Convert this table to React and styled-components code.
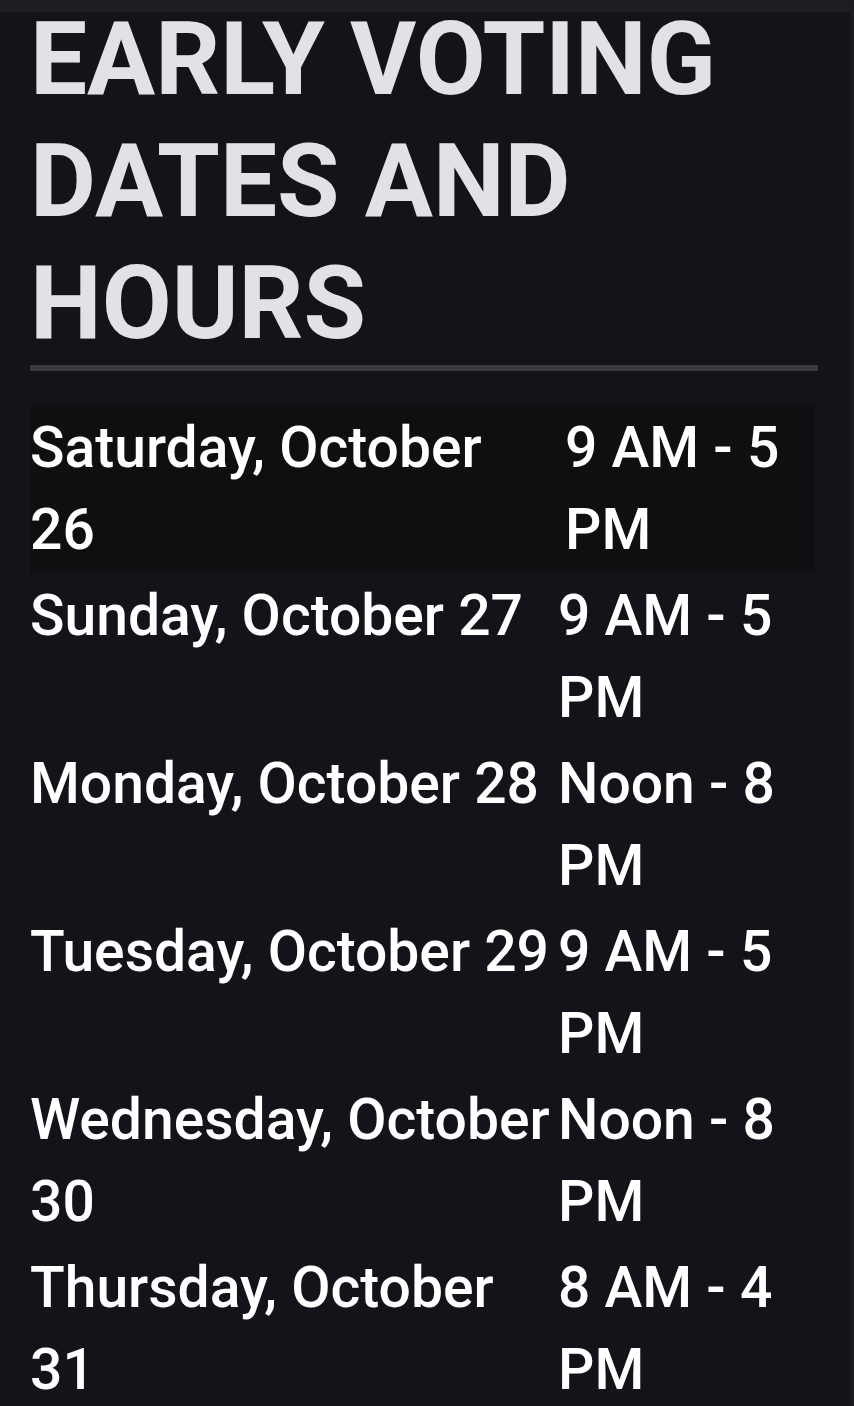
import React from 'react';
import styled, { createGlobalStyle } from 'styled-components';

const GlobalStyle = createGlobalStyle`
    html, body {
        margin: 0;
        padding: 0;
        background: #131419;
    }
    body {
        font-family: Roboto, "Noto Sans", "Liberation Sans", sans-serif;
        -webkit-font-smoothing: antialiased;
    }
`;

const Page = styled.main`
    position: relative;
    min-height: 1406px;
    box-sizing: border-box;
    padding: 0 32px 0 30px;
    border-right: 4px solid #1b1c21;
    border-bottom: 3px solid #3d3e43;
    overflow: hidden;
`;

// NOTE: browser chrome strip that sits over the top of the page.
const TopBar = styled.div`
    position: absolute;
    top: 0;
    left: 0;
    right: 0;
    height: 12px;
    background: #1d1e23;
`;

const Title = styled.h1`
    margin: -1px 0 0;
    font-size: 101.5px;
    line-height: 122px;
    font-weight: 700;
    color: #e2e2e6;
`;

const Divider = styled.hr`
    margin: 0;
    width: 788px;
    height: 6px;
    border: 0;
    background: #3a3b41;
`;

const Schedule = styled.div`
    margin-top: 34px;
    width: 785px;
    display: flex;
    flex-direction: column;
`;

const Row = styled.div`
    display: grid;
    grid-template-columns: 528px 1fr;
    padding: 2px 0;
    background: ${({ $highlight }) => ($highlight ? '#0f0f11' : 'transparent')};
`;

const Cell = styled.div`
    padding-left: ${({ $shift }) => ($shift ? '7px' : '0')};
    font-size: 57px;
    line-height: 82px;
    font-weight: 500;
    color: #ffffff;
`;

const hours = [
    { day: 'Saturday, October 26', time: '9 AM - 5 PM' },
    { day: 'Sunday, October 27', time: '9 AM - 5 PM' },
    { day: 'Monday, October 28', time: 'Noon - 8 PM' },
    { day: 'Tuesday, October 29', time: '9 AM - 5 PM' },
    { day: 'Wednesday, October 30', time: 'Noon - 8 PM' },
    { day: 'Thursday, October 31', time: '8 AM - 4 PM' },
];

export default function App(){
    return <>
        <GlobalStyle />
        <Page>
            <TopBar />
            <Title>EARLY VOTING DATES AND HOURS</Title>
            <Divider />
            <Schedule>
                {hours.map((h, i) => (
                    <Row key={h.day} $highlight={i === 0}>
                        <Cell>{h.day}</Cell>
                        <Cell $shift={i === 0}>{h.time}</Cell>
                    </Row>
                ))}
            </Schedule>
        </Page>
    </>;
}
